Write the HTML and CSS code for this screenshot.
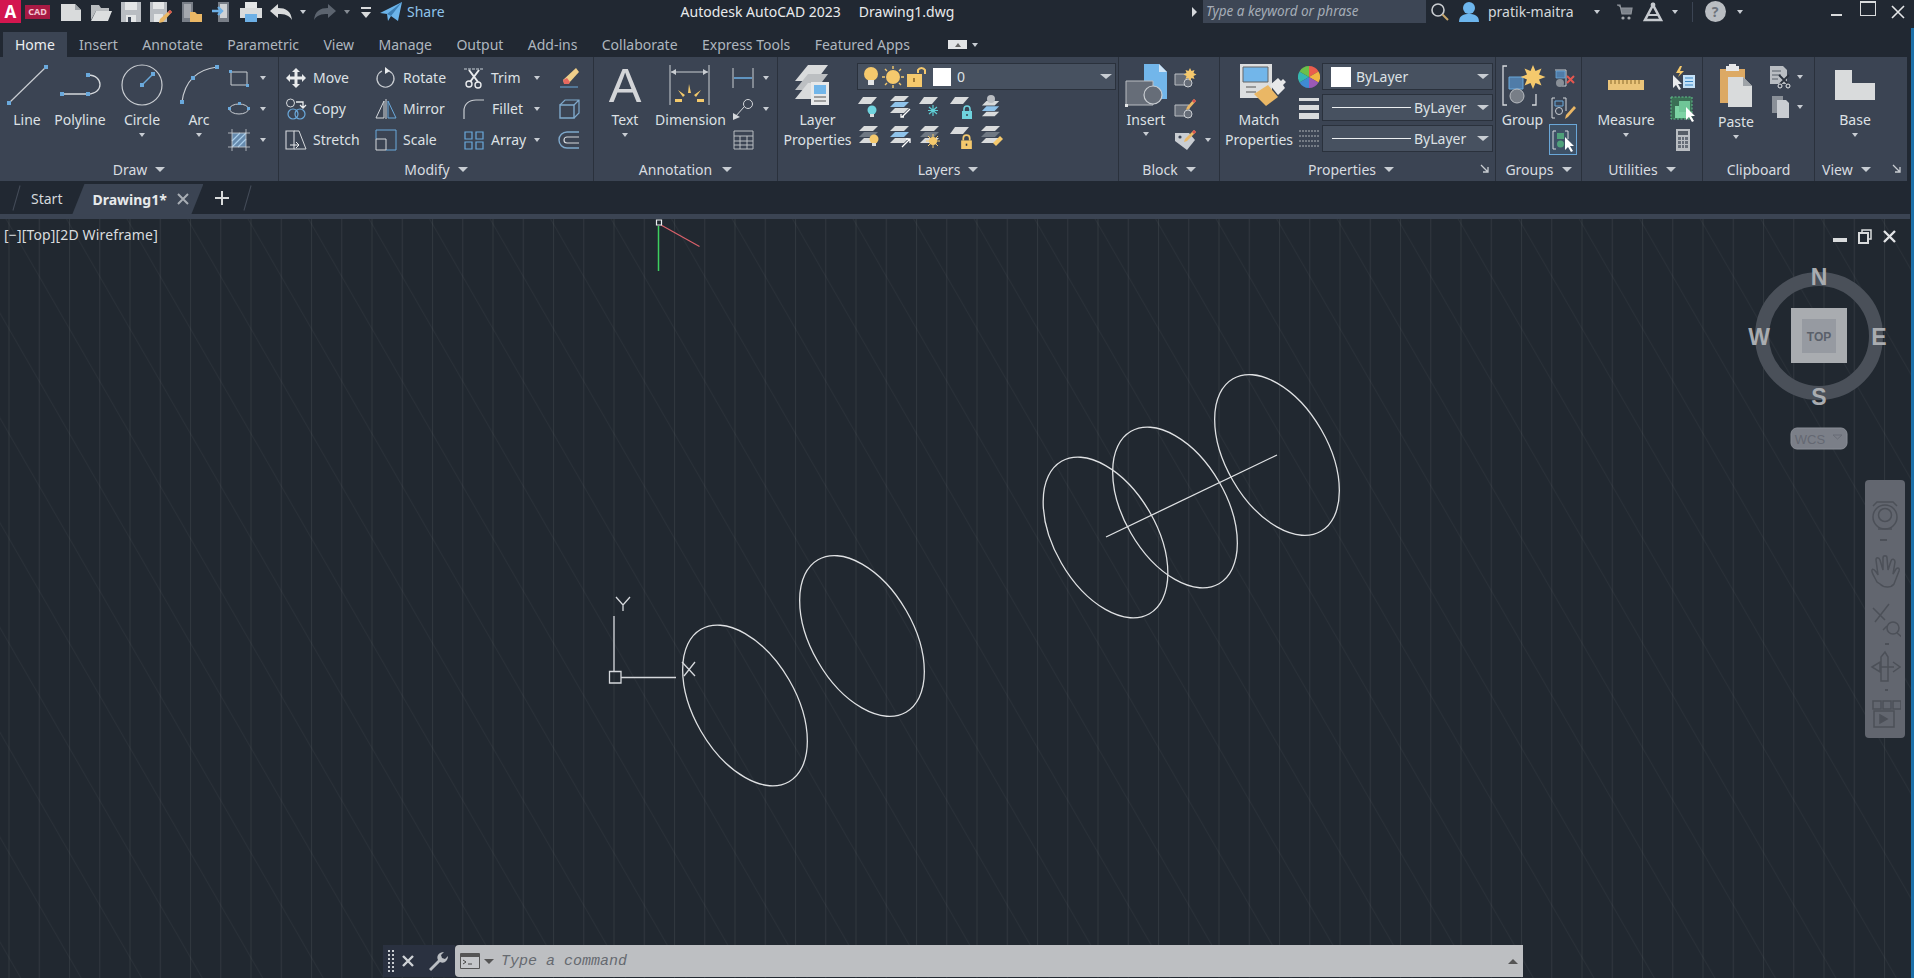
FILE: index.html
```html
<!DOCTYPE html>
<html lang="en">
<head>
<meta charset="utf-8">
<title>Autodesk AutoCAD 2023 - Drawing1.dwg</title>
<link rel="stylesheet" href="styles.css">
</head>
<body>
<svg class="defs" width="0" height="0">
  <defs>
    <symbol id="plate" viewBox="0 0 24 22"><path d="M6 2h14l-6 7H1z" fill="#d9dbdc"/></symbol>
    <symbol id="stack" viewBox="0 0 24 22"><path d="M7 1h14l-5 5H2z" fill="#d9dbdc"/><path d="M7 7h14l-5 5H2z" fill="#6f7883"/><path d="M7 13h14l-5 5H2z" fill="#d9dbdc"/></symbol>
    <symbol id="bluestack" viewBox="0 0 24 22"><path d="M7 1h14l-5 5H2z" fill="#d9dbdc"/><path d="M7 7h14l-5 5H2z" fill="#8ec2ea"/><path d="M7 13h14l-5 5H2z" fill="#d9dbdc"/></symbol>
    <symbol id="lockshape" viewBox="0 0 12 14"><path d="M3 6V4a3 3 0 0 1 6 0v2" fill="none" stroke="currentColor" stroke-width="1.6"/><rect x="1" y="6" width="10" height="8" fill="currentColor"/><path d="M6 9v2" stroke="#333b47" stroke-width="1.4"/></symbol>
  </defs>
</svg>
<div class="window">

  <header class="titlebar">
    <div class="logo"><span class="logo-a">A</span><span class="logo-cad">CAD</span></div>
    <div class="qat">
      <svg width="22" height="20" viewBox="0 0 22 20"><path d="M1 2h14l6 6v11H1z" fill="#d9dbdc"/><path d="M15 2l6 6h-6z" fill="#9ea3a8"/></svg>
      <svg width="22" height="20" viewBox="0 0 22 20"><path d="M1 3h8l2 3h8v3H6L1 18z" fill="#b9bcbf"/><path d="M6 9h16l-4 10H1z" fill="#dcdedf"/></svg>
      <svg width="22" height="22" viewBox="0 0 22 22"><path d="M1 1h20v20H1z" fill="#b9bdc2"/><path d="M5 1h12v8H5z" fill="#e4e6e7"/><path d="M6 14h10v7H6z" fill="#e4e6e7"/><path d="M8 16h3v5H8z" fill="#3b4453"/></svg>
      <svg width="24" height="22" viewBox="0 0 24 22"><path d="M1 1h17v20H1z" fill="#b9bdc2"/><path d="M4 1h11v7H4z" fill="#e4e6e7"/><path d="M5 13h9v8H5z" fill="#e4e6e7"/><path d="M21 9l2 2-9 10-4 1 1-4z" fill="#eab765"/><path d="M21 9l2 2-2 2-2-2z" fill="#d9534f"/></svg>
      <svg width="24" height="22" viewBox="0 0 24 22"><path d="M3 1h11v20H3z" fill="#787e87"/><path d="M5 3h7v14H5z" fill="#a4a8ae"/><path d="M11 11h5l2 2h5v8H11z" fill="#eab765"/></svg>
      <svg width="22" height="22" viewBox="0 0 22 22"><path d="M8 1h11v20H8z" fill="#787e87"/><path d="M10 3h7v14h-7z" fill="#cfd2d5"/><path d="M2 10h9M8 6l4 4-4 4" fill="none" stroke="#6db0e6" stroke-width="2.4"/></svg>
      <svg width="24" height="22" viewBox="0 0 24 22"><path d="M6 1h12v6H6z" fill="#e4e6e7"/><path d="M1 7h22v10H1z" fill="#d9dbdc"/><path d="M6 13h12v8H6z" fill="#6db0e6"/></svg>
      <svg width="24" height="18" viewBox="0 0 24 18"><path d="M1 8l8-7v4c8 0 13 3 14 12-3-5-7-6-14-6v4z" fill="#d9dbdc"/></svg>
      <i class="caret"></i>
      <svg width="24" height="18" viewBox="0 0 24 18"><path d="M23 8l-8-7v4C7 5 2 8 1 17c3-5 7-6 14-6v4z" fill="#5c646f"/></svg>
      <i class="caret dim"></i>
      <svg width="12" height="12" viewBox="0 0 12 12"><path d="M1 1h10v2H1z" fill="#d9dbdc"/><path d="M1 6h10L6 12z" fill="#d9dbdc"/></svg>
      <svg width="22" height="20" viewBox="0 0 22 20"><path d="M0 11L22 0l-4 19-7-5-3 5-1-7z" fill="#6cb4ea"/><path d="M7 12L22 0 11 14z" fill="#3d7fb5"/></svg>
      <span class="share">Share</span>
    </div>
    <div class="app-title"><span>Autodesk AutoCAD 2023</span><span>Drawing1.dwg</span></div>
    <div class="infocenter">
      <i class="tri-right"></i>
      <div class="search">Type a keyword or phrase</div>
      <svg width="20" height="20" viewBox="0 0 20 20"><circle cx="8" cy="8" r="6" fill="none" stroke="#c9ccd0" stroke-width="1.6"/><path d="M12.5 12.5L18 18" stroke="#c7a66a" stroke-width="2"/></svg>
      <svg width="22" height="22" viewBox="0 0 22 22"><circle cx="11" cy="7" r="6" fill="#6db6ee"/><path d="M1 21c0-7 5-8 10-8s10 1 10 8z" fill="#6db6ee"/></svg>
      <span class="user">pratik-maitra</span>
      <i class="caret"></i>
      <svg width="18" height="18" viewBox="0 0 18 18"><path d="M1 2h3l2 9h9l1-6H5" fill="#7d838b" stroke="#8f949b" stroke-width="1.2"/><circle cx="7" cy="15" r="1.6" fill="#a3a7ac"/><circle cx="13" cy="15" r="1.6" fill="#a3a7ac"/></svg>
      <svg width="20" height="20" viewBox="0 0 20 20"><path d="M10 3L2 18h16z" fill="none" stroke="#c6cacf" stroke-width="2.6"/><circle cx="10" cy="3" r="2.4" fill="#c6cacf"/><path d="M5 13h10" stroke="#c6cacf" stroke-width="2"/></svg>
      <i class="caret"></i>
      <i class="qat-sep"></i>
      <span class="help">?</span>
      <i class="caret"></i>
      <i class="gap"></i>
      <i class="win-min"></i>
      <i class="win-max"></i>
      <svg width="14" height="14" viewBox="0 0 14 14"><path d="M1 1l12 12M13 1L1 13" stroke="#e4e6e8" stroke-width="1.6"/></svg>
    </div>
  </header>

  <nav class="tabs">
    <a class="tab active">Home</a>
    <a class="tab">Insert</a>
    <a class="tab">Annotate</a>
    <a class="tab">Parametric</a>
    <a class="tab">View</a>
    <a class="tab">Manage</a>
    <a class="tab">Output</a>
    <a class="tab">Add-ins</a>
    <a class="tab">Collaborate</a>
    <a class="tab">Express Tools</a>
    <a class="tab">Featured Apps</a>
    <span class="tab-toggle"><i class="tri-up"></i></span>
    <i class="caret"></i>
  </nav>

  <section class="ribbon">

    <div class="panel draw">
      <div class="body">
        <div class="big">
          <svg width="54" height="48" viewBox="0 0 54 48"><path d="M9 40L46 4" stroke="#c9cdd2" stroke-width="1.2"/><path d="M7 38h4v4H7zM44 2h4v4h-4z" fill="#6aa9dc"/></svg>
          <span>Line</span>
        </div>
        <div class="big">
          <svg width="52" height="48" viewBox="0 0 52 48"><path d="M8 31h26c16 0 16-19 0-19" fill="none" stroke="#d5d8dc" stroke-width="1.3"/><path d="M6 29h4v4H6zM32 29h4v4h-4zM32 10h4v4h-4z" fill="#6aa9dc"/></svg>
          <span>Polyline</span>
        </div>
        <div class="big">
          <svg width="72" height="48" viewBox="0 0 72 48"><circle cx="36" cy="22" r="20" fill="none" stroke="#c9cdd2" stroke-width="1.2"/><path d="M36 22L47 11" stroke="#6aa9dc" stroke-width="1.4"/><path d="M34 20h4v4h-4zM45 9h4v4h-4z" fill="#6aa9dc"/></svg>
          <span>Circle</span><i class="caret"></i>
        </div>
        <div class="big">
          <svg width="42" height="48" viewBox="0 0 42 48"><path d="M4 39Q8 8 39 4" fill="none" stroke="#c9cdd2" stroke-width="1.2"/><path d="M2 37h4v4H2zM13 13h4v4h-4zM37 2h4v4h-4z" fill="#6aa9dc"/></svg>
          <span>Arc</span><i class="caret"></i>
        </div>
        <div class="small-col draw-small">
          <div class="irow">
            <svg width="22" height="18" viewBox="0 0 22 18"><path d="M3 3h16v13H3z" fill="none" stroke="#c9cdd2"/><path d="M1 1h3v3H1zM18 15h3v3h-3z" fill="#6aa9dc"/></svg><i class="caret push"></i>
          </div>
          <div class="irow">
            <svg width="22" height="14" viewBox="0 0 22 14"><ellipse cx="11" cy="7" rx="9.5" ry="5" fill="none" stroke="#c9cdd2"/><path d="M0 5h3v3H0zM10 0h3v3h-3zM19 5h3v3h-3z" fill="#6aa9dc"/></svg><i class="caret push"></i>
          </div>
          <div class="irow">
            <svg width="22" height="22" viewBox="0 0 22 22"><path d="M4 4h14v14H4z" fill="#668aad"/><path d="M4 12l8-8M4 18L18 4M10 18l8-8" stroke="#a9cdea" stroke-width="1.2"/><path d="M4 0v22M18 0v22M0 4h22M0 18h22" stroke="#c9cdd2" stroke-width=".8"/></svg><i class="caret push"></i>
          </div>
        </div>
      </div>
      <div class="panel-title">Draw <i class="caret"></i></div>
    </div>

    <div class="panel modify">
      <div class="body modify-grid">
        <div class="tool"><svg width="22" height="22" viewBox="0 0 22 22"><path d="M11 1l4 4h-2.500v4.500H17V7l4 4-4 4v-2.500h-4.500V17H15l-4 4-4-4h2.500v-4.500H5V15l-4-4 4-4v2.500h4.500V5H7z" fill="#e9ebed"/></svg><span>Move</span></div>
        <div class="tool"><svg width="22" height="22" viewBox="0 0 22 22"><path d="M14 4a8.500 8.500 0 1 1-7 0" fill="none" stroke="#c9cdd2" stroke-width="1.2"/><path d="M10 0l5 4-5 3z" fill="#e9ebed"/></svg><span>Rotate</span></div>
        <div class="tool"><svg width="22" height="22" viewBox="0 0 22 22"><path d="M1 2h20" stroke="#9aa3ad" stroke-width="1.4" stroke-dasharray="3 1"/><path d="M6 3l9 12M16 3L7 15" stroke="#e9ebed" stroke-width="2"/><circle cx="6" cy="17" r="3" fill="none" stroke="#e9ebed" stroke-width="1.4"/><circle cx="15" cy="18" r="3" fill="none" stroke="#e9ebed" stroke-width="1.4"/></svg><span>Trim</span><i class="caret"></i></div>
        <div class="tool lone"><svg width="22" height="22" viewBox="0 0 22 22"><path d="M18 1l3 4-10 11H6l-1-3z" fill="#f0cf8a"/><path d="M5 13l1 4h5l1-2-3-4z" fill="#e5685f"/><path d="M2 20h18" stroke="#6aa9dc"/></svg></div>

        <div class="tool"><svg width="22" height="22" viewBox="0 0 22 22"><circle cx="5.500" cy="5" r="4" fill="none" stroke="#d5d8dc"/><path d="M11 4h7v5M15 7l3 3 3-3" fill="none" stroke="#e9ebed" stroke-width="1.3"/><circle cx="8" cy="16" r="5" fill="none" stroke="#6aa9dc" stroke-width="1.2"/><circle cx="15" cy="16" r="5" fill="none" stroke="#6aa9dc" stroke-width="1.2"/></svg><span>Copy</span></div>
        <div class="tool"><svg width="22" height="22" viewBox="0 0 22 22"><path d="M9 3v17H1z" fill="none" stroke="#d5d8dc"/><path d="M13 3v17h8z" fill="none" stroke="#6aa9dc"/><path d="M11 1v20" stroke="#d5d8dc"/></svg><span>Mirror</span></div>
        <div class="tool"><svg width="22" height="22" viewBox="0 0 22 22"><path d="M1 21v-8C1 6 6 2 13 2h8" fill="none" stroke="#c9cdd2" stroke-width="1.2"/></svg><span class="fillet">Fillet</span><i class="caret"></i></div>
        <div class="tool lone"><svg width="22" height="22" viewBox="0 0 22 22"><path d="M2 7h14v13H2z" fill="none" stroke="#7fa9cc" stroke-width="1.4"/><path d="M2 7l5-5h14v13l-5 5M16 7l5-5" fill="none" stroke="#7fa9cc" stroke-width="1.2"/></svg></div>

        <div class="tool"><svg width="22" height="22" viewBox="0 0 22 22"><path d="M1 2h8v18H1z" fill="none" stroke="#d5d8dc" stroke-width="1.1"/><path d="M9 2h5l7 18H9" fill="none" stroke="#d5d8dc" stroke-width="1"/><path d="M5 16h9M11 13l3 3-3 3" fill="none" stroke="#e9ebed"/></svg><span>Stretch</span></div>
        <div class="tool"><svg width="22" height="22" viewBox="0 0 22 22"><path d="M1 1h20v20H11" fill="none" stroke="#6aa9dc"/><path d="M1 1v9" stroke="#6aa9dc"/><path d="M1 10h10v11H1z" fill="none" stroke="#d5d8dc"/></svg><span>Scale</span></div>
        <div class="tool"><svg width="22" height="22" viewBox="0 0 22 22"><path d="M2 3h7v7H2zM13 3h7v7h-7zM2 13h7v7H2zM13 13h7v7h-7z" fill="none" stroke="#6aa9dc" stroke-width="1.2"/></svg><span>Array</span><i class="caret"></i></div>
        <div class="tool lone"><svg width="22" height="22" viewBox="0 0 22 22"><path d="M21 3H9a8 8 0 0 0 0 16h12" fill="none" stroke="#7fa9cc" stroke-width="1.4"/><path d="M21 8H9a3 3 0 0 0 0 6h12" fill="none" stroke="#d5d8dc" stroke-width="1.2"/></svg></div>
      </div>
      <div class="panel-title">Modify <i class="caret"></i></div>
    </div>

    <div class="panel annotation">
      <div class="body">
        <div class="big"><span class="big-a">A</span><span>Text</span><i class="caret"></i></div>
        <div class="big">
          <svg width="69" height="48" viewBox="0 0 69 48"><path d="M14 2v40M53 2v40" stroke="#c9cdd2"/><path d="M15 9h37" stroke="#c9cdd2"/><path d="M15 9l5-3v6zM52 9l-5-3v6z" fill="#c9cdd2"/><path d="M33 21l2 9h-3zM22 27l7 5-2 2zM45 27l-7 5 2 2zM19 36h7v3h-7zM41 36h7v3h-7z" fill="#f3c96b"/></svg>
          <span>Dimension</span>
        </div>
        <div class="small-col">
          <div class="irow"><svg width="36" height="22" viewBox="0 0 36 22"><path d="M8 1v20M28 1v20" stroke="#c9cdd2"/><path d="M9 11h18" stroke="#6aa9dc" stroke-width="1.6"/></svg><i class="caret"></i></div>
          <div class="irow"><svg width="36" height="24" viewBox="0 0 36 24"><circle cx="23" cy="7" r="4.500" fill="none" stroke="#d5d8dc"/><path d="M19 10L10 20" stroke="#d5d8dc"/><path d="M8 16l7 4-7 3z" fill="#d5d8dc"/></svg><i class="caret"></i></div>
          <div class="irow"><svg width="36" height="22" viewBox="0 0 36 22"><path d="M9 2h19v18H9zM9 7h19M9 12h19M9 16h19M15 7v13M22 7v13" fill="none" stroke="#b9bdc2"/></svg></div>
        </div>
      </div>
      <div class="panel-title">Annotation <i class="caret"></i></div>
    </div>

    <div class="panel layers">
      <div class="body">
        <div class="big wide-label">
          <svg width="60" height="48" viewBox="0 0 60 48"><path d="M20 2h20L28 18H7z" fill="#d9dbdc"/><path d="M20 11h20L28 27H7z" fill="#bcbfc2"/><path d="M20 20h20L28 36H7z" fill="#d9dbdc"/><path d="M23 19h18v23H23z" fill="#e7e8e9"/><path d="M26 22h12v9H26z" fill="#72b6ea"/><path d="M26 34h12M26 38h12" stroke="#555"/></svg>
          <span>Layer<br>Properties</span>
        </div>
        <div class="layer-col">
          <div class="combo layer-combo">
            <svg width="18" height="24" viewBox="0 0 18 24"><circle cx="9" cy="9" r="7" fill="#f5c96d"/><path d="M6 15h6v5H6z" fill="#e4e6e7"/></svg>
            <svg width="24" height="24" viewBox="0 0 24 24"><circle cx="12" cy="12" r="7" fill="#f5c96d"/><path d="M12 1v3M12 20v3M1 12h3M20 12h3M4 4l2 2M18 18l2 2M20 4l-2 2M4 20l2-2" stroke="#f5c96d" stroke-width="1.4"/></svg>
            <svg width="20" height="24" viewBox="0 0 20 24"><path d="M12 8V5a4 4 0 0 1 7 0v4" fill="none" stroke="#f5c96d" stroke-width="2"/><path d="M1 9h15v13H1z" fill="#f5c96d"/><path d="M8 13v4" stroke="#7d5a20" stroke-width="1.4"/></svg>
            <i class="swatch small-swatch"></i>
            <span class="combo-text">0</span>
            <i class="caret big-caret"></i>
          </div>
          <div class="icon-row">
            <svg width="24" height="24" viewBox="0 0 24 24"><use href="#plate" width="24" height="22"/><circle cx="15" cy="15" r="4.500" fill="#6fd3de"/><path d="M13 19h4v3h-4z" fill="#d9dbdc"/></svg>
            <svg width="24" height="24" viewBox="0 0 24 24"><use href="#bluestack" width="24" height="22"/><path d="M22 14l-8 8M16 22h-3v-3" stroke="#fff" stroke-width="1.3" fill="none"/></svg>
            <svg width="24" height="24" viewBox="0 0 24 24"><use href="#plate" width="24" height="22"/><path d="M15 10v11M10 15.500h10M11 12l8 7M19 12l-8 7" stroke="#5fcfd6" stroke-width="1.2"/></svg>
            <svg width="24" height="24" viewBox="0 0 24 24"><use href="#plate" width="24" height="22"/><use href="#lockshape" x="12" y="10" width="12" height="14" color="#6fd3de"/></svg>
            <svg width="24" height="24" viewBox="0 0 24 24"><use href="#bluestack" y="5" width="24" height="20"/><circle cx="12" cy="4" r="4" fill="#b9bdc2"/></svg>
          </div>
          <div class="icon-row">
            <svg width="24" height="24" viewBox="0 0 24 24"><use href="#stack" width="24" height="22"/><circle cx="17" cy="14" r="4.500" fill="#f5c96d"/><path d="M15 18h4v3h-4z" fill="#d9dbdc"/></svg>
            <svg width="24" height="24" viewBox="0 0 24 24"><use href="#bluestack" width="24" height="22"/><path d="M14 22l8-8M18 14h4v4" stroke="#fff" stroke-width="1.3" fill="none"/></svg>
            <svg width="24" height="24" viewBox="0 0 24 24"><use href="#stack" width="24" height="22"/><circle cx="15" cy="16" r="4" fill="#f5c96d"/><path d="M15 9v14M8 16h14M10 11l10 10M20 11L10 21" stroke="#f5c96d"/></svg>
            <svg width="24" height="24" viewBox="0 0 24 24"><use href="#plate" width="24" height="22"/><use href="#lockshape" x="11" y="9" width="13" height="15" color="#f5c96d"/></svg>
            <svg width="24" height="24" viewBox="0 0 24 24"><use href="#stack" width="24" height="22"/><path d="M14 18l7-7 3 3-7 7z" fill="#f5c96d"/></svg>
          </div>
        </div>
      </div>
      <div class="panel-title">Layers <i class="caret"></i></div>
    </div>

    <div class="panel block">
      <div class="body">
        <div class="big">
          <svg width="54" height="46" viewBox="0 0 54 46"><path d="M25 0h15l8 8v27H25z" fill="#72b6ea"/><path d="M40 0l8 8h-8z" fill="#cfe4f5"/><path d="M7 17h27v24H7z" fill="#666d78" stroke="#b9bdc2"/><circle cx="34" cy="31" r="9" fill="#666d78" stroke="#c9cdd2" stroke-width="1.2"/><path d="M6 40h3v3H6z" fill="#e4e6e7"/></svg>
          <span class="up-label">Insert</span><i class="caret up-caret"></i>
        </div>
        <div class="small-col">
          <div class="irow"><svg width="24" height="22" viewBox="0 0 24 22"><path d="M2 7h14v11H2z" fill="#666d78" stroke="#b9bdc2"/><circle cx="15" cy="16" r="4" fill="#666d78" stroke="#c9cdd2"/><path d="M17 1l1.500 3 3-1-1 3 3 1.500-3 1.500 1 3-3-1-1.500 3-1.500-3-3 1 1-3-3-1.500 3-1.500-1-3 3 1z" fill="#f5c96d"/></svg></div>
          <div class="irow"><svg width="24" height="22" viewBox="0 0 24 22"><path d="M2 7h14v11H2z" fill="#666d78" stroke="#b9bdc2"/><circle cx="15" cy="16" r="4" fill="#666d78" stroke="#c9cdd2"/><path d="M21 1l2 2-7 8-3 1 1-3z" fill="#eab765"/><path d="M21 1l2 2-2 2-2-2z" fill="#d9534f"/></svg></div>
          <div class="irow wide-row"><svg width="24" height="22" viewBox="0 0 24 22"><path d="M2 4h14l6 7-8 10-12-9z" fill="#c9cdd2"/><circle cx="7" cy="8" r="1.600" fill="#3b4453"/><path d="M21 1l2 2-9 9-3 1 1-3z" fill="#eab765"/><path d="M21 1l2 2-2 2-2-2z" fill="#d9534f"/></svg><i class="caret"></i></div>
        </div>
      </div>
      <div class="panel-title">Block <i class="caret"></i></div>
    </div>

    <div class="panel properties">
      <div class="body">
        <div class="big wide-label">
          <svg width="78" height="48" viewBox="0 0 78 48"><path d="M20 1h32v34H20z" fill="#dcdedf"/><path d="M23 4h25v15H23z" fill="#72b6ea" stroke="#666"/><path d="M26 24h10M26 29h10" stroke="#555"/><path d="M34 31l14-9 10 12-12 9z" fill="#eab765"/><path d="M50 22l8-7 3 3 2-2 3 3-3 3 2 3-7 7z" fill="#e7e8e9"/></svg>
          <span>Match<br>Properties</span>
        </div>
        <div class="prop-col">
          <div class="prop-row">
            <svg class="wheel" width="22" height="22" viewBox="0 0 22 22"><path d="M11 11V0a11 11 0 0 1 9.500 5.500z" fill="#eb5d4d"/><path d="M11 11l9.500-5.500a11 11 0 0 1 0 11z" fill="#f1b542"/><path d="M11 11l9.500 5.500A11 11 0 0 1 11 22z" fill="#9b59b6"/><path d="M11 11v11a11 11 0 0 1-9.500-5.500z" fill="#3f8bd3"/><path d="M11 11L1.500 16.500a11 11 0 0 1 0-11z" fill="#35b7b0"/><path d="M11 11L1.500 5.500A11 11 0 0 1 11 0z" fill="#6cc04a"/></svg>
            <div class="combo"><i class="swatch"></i><span class="combo-text">ByLayer</span><i class="caret big-caret"></i></div>
          </div>
          <div class="prop-row">
            <svg width="22" height="22" viewBox="0 0 22 22"><path d="M1 1h20v3H1zM1 8h20v5H1zM1 16h20v6H1z" fill="#d9dbdc"/></svg>
            <div class="combo"><i class="line-sample"></i><span class="combo-text tight">ByLayer</span><i class="caret big-caret"></i></div>
          </div>
          <div class="prop-row">
            <svg width="22" height="22" viewBox="0 0 22 22"><path d="M1 3h20M1 8h20M1 13h20M1 18h20" stroke="#aeb2b7" stroke-dasharray="2 1"/></svg>
            <div class="combo"><i class="line-sample"></i><span class="combo-text tight">ByLayer</span><i class="caret big-caret"></i></div>
          </div>
        </div>
      </div>
      <div class="panel-title shift-left">Properties <i class="caret"></i></div>
      <svg class="launch" width="10" height="10" viewBox="0 0 10 10"><path d="M1 1l7 7M3 8h5V3" fill="none" stroke="#c9cdd2" stroke-width="1.300"/></svg>
    </div>

    <div class="panel groups">
      <div class="body">
        <div class="big">
          <svg width="53" height="48" viewBox="0 0 53 48"><path d="M11 3H7v39h4M36 42h4V31" fill="none" stroke="#d5d8dc" stroke-width="1.300"/><path d="M13 14h14v12H13z" fill="#507ca8" stroke="#6aa9dc"/><circle cx="21" cy="33" r="7" fill="#787e87" stroke="#b9bdc2"/><path d="M37 2l2.500 6 6-2.500-2.500 6 6.500 2.500-6.500 2.500 2.500 6-6-2.500-2.500 6-2.500-6-6 2.500 2.500-6-6.500-2.500 6.500-2.500-2.500-6 6 2.500z" fill="#f5c96d"/></svg>
          <span>Group</span>
        </div>
        <div class="small-col">
          <div class="irow"><svg width="28" height="22" viewBox="0 0 28 22"><path d="M6 3h11M17 3v16h-4" fill="none" stroke="#c9cdd2"/><path d="M7 4h9v7H7z" fill="#507ca8" stroke="#6aa9dc" stroke-width=".8"/><circle cx="11" cy="16" r="4" fill="#8a9098"/><path d="M18 9l7 7M25 9l-7 7" stroke="#e5574f" stroke-width="2"/></svg></div>
          <div class="irow"><svg width="28" height="24" viewBox="0 0 28 24"><path d="M6 1H3v20h3M14 1h3v13" fill="none" stroke="#d5d8dc"/><path d="M6 4h8v5H6z" fill="none" stroke="#6aa9dc"/><circle cx="10" cy="14" r="3.500" fill="none" stroke="#c9cdd2"/><path d="M25 9l2 2-8 9-3 2 1-4z" fill="#eab765"/></svg></div>
          <div class="irow selected"><svg width="26" height="24" viewBox="0 0 26 24"><path d="M6 3H3v18h3M15 3h3v8" fill="none" stroke="#d5d8dc"/><path d="M7 5h7v6H7z" fill="#4fa07a"/><circle cx="10.500" cy="16" r="3.500" fill="#4fa07a"/><path d="M15 9v13l3-3 3 5 2-1-3-5h4z" fill="#fff"/></svg></div>
        </div>
      </div>
      <div class="panel-title">Groups <i class="caret"></i></div>
    </div>

    <div class="panel utilities">
      <div class="body">
        <div class="big">
          <svg width="88" height="48" viewBox="0 0 88 48"><path d="M26 17h36v10H26z" fill="#eac47a"/><path d="M29 17v4M33 17v4M37 17v4M41 17v4M45 17v4M49 17v4M53 17v4M57 17v4" stroke="#8a6a2c"/></svg>
          <span>Measure</span><i class="caret"></i>
        </div>
        <div class="small-col">
          <div class="irow"><svg width="26" height="26" viewBox="0 0 26 26"><path d="M10 1L6 8h4l-2 4 6-6h-4l2-5z" fill="#f5c96d"/><path d="M3 10v13l3-3 3 5 2-1-3-5h4z" fill="#e9ebed"/><path d="M13 10h12v13H13z" fill="#c5e2f7"/><path d="M15 13h8M15 16.500h8M15 20h8" stroke="#3a87c6"/></svg></div>
          <div class="irow"><svg width="26" height="26" viewBox="0 0 26 26"><path d="M1 1h21v22H1z" fill="#3a6f55" stroke="#63c28d" stroke-dasharray="2 1.500"/><path d="M5 10h11v12H5z" fill="#7dd3a4"/><path d="M9 5h11v11H9z" fill="#6fc597"/><path d="M16 11v13l3-3 3 5 2-1-3-5h4z" fill="#fff"/></svg></div>
          <div class="irow"><svg width="16" height="22" viewBox="0 0 16 22"><path d="M1 0h14v22H1z" fill="#b9bdc2"/><path d="M3 2h10v4H3z" fill="#555c66"/><path d="M3 8h3v3H3zM7 8h2v3H7zM10 8h3v3h-3zM3 12h3v3H3zM7 12h2v3H7zM10 12h3v3h-3zM3 16h3v3H3zM7 16h2v3H7zM10 16h3v3h-3z" fill="#666d78"/></svg></div>
        </div>
      </div>
      <div class="panel-title">Utilities <i class="caret"></i></div>
    </div>

    <div class="panel clipboard">
      <div class="body">
        <div class="big">
          <svg width="66" height="48" viewBox="0 0 66 48"><path d="M17 6h25v34H17z" fill="#dca964"/><path d="M23 3h13v5H23z" fill="#e7e8e9"/><path d="M26 1h7v3h-7z" fill="#e7e8e9"/><path d="M25 14h15l9 9v21H25z" fill="#d9dbdc"/><path d="M40 14l9 9h-9z" fill="#9ea3a8"/></svg>
          <span class="down-label">Paste</span><i class="caret"></i>
        </div>
        <div class="small-col">
          <div class="irow"><svg width="22" height="24" viewBox="0 0 22 24"><path d="M1 1h13l4 4v14H1z" fill="#b9bdc2"/><path d="M3 6h9M3 10h9M3 14h6" stroke="#555c66"/><path d="M10 10l10 10M20 10L10 20" stroke="#2a313c" stroke-width="1.800"/><circle cx="11" cy="21" r="2" fill="none" stroke="#e9ebed"/><circle cx="19" cy="21" r="2" fill="none" stroke="#e9ebed"/></svg><i class="caret"></i></div>
          <div class="irow"><svg width="22" height="24" viewBox="0 0 22 24"><path d="M3 1h11v17H3z" fill="#8a9098"/><path d="M8 5h9l3 3v15H8z" fill="#c9cdd2"/></svg><i class="caret"></i></div>
        </div>
      </div>
      <div class="panel-title">Clipboard</div>
    </div>

    <div class="panel viewp">
      <div class="body">
        <div class="big">
          <svg width="80" height="48" viewBox="0 0 80 48"><path d="M20 7h17v13h23v17H20z" fill="#d9dbdc"/></svg>
          <span>Base</span><i class="caret"></i>
        </div>
      </div>
      <div class="panel-title shift-left">View <i class="caret"></i></div>
      <svg class="launch" width="10" height="10" viewBox="0 0 10 10"><path d="M1 1l7 7M3 8h5V3" fill="none" stroke="#c9cdd2" stroke-width="1.300"/></svg>
    </div>
  </section>

  <div class="doctabs">
    <i class="doc-slash first"></i>
    <span class="doc-start">Start</span>
    <div class="doc-active"><span>Drawing1*</span><svg width="12" height="12" viewBox="0 0 12 12"><path d="M1 1l10 10M11 1L1 11" stroke="#a8adb4" stroke-width="2"/></svg></div>
    <svg class="doc-plus" width="16" height="16" viewBox="0 0 16 16"><path d="M8 1v14M1 8h14" stroke="#d9dbdc" stroke-width="2"/></svg>
    <i class="doc-slash"></i>
  </div>
  <div class="strip"></div>

  <main class="canvas">
    <svg class="model" viewBox="0 219 1914 759" width="1914" height="759">
      <defs>
        <pattern id="vgrid" patternUnits="userSpaceOnUse" width="30.25" height="40" x="8.500">
          <path d="M.5 0v40" stroke="#fff" stroke-opacity=".07"/>
        </pattern>
        <pattern id="dgrid" patternUnits="userSpaceOnUse" width="52.400" height="100" patternTransform="rotate(-30)">
          <path d="M.5 0v100" stroke="#fff" stroke-opacity=".04"/>
        </pattern>
      </defs>
      <rect x="0" y="219" width="1914" height="759" fill="url(#vgrid)"/>
      <rect x="0" y="219" width="1914" height="759" fill="url(#dgrid)"/>

      <g fill="none" stroke="#dfe1e3" stroke-width="1.300">
        <ellipse cx="745" cy="705.500" rx="51" ry="88" transform="rotate(-30 745 705.500)"/>
        <ellipse cx="862" cy="636" rx="51" ry="88" transform="rotate(-30 862 636)"/>
        <ellipse cx="1105.500" cy="537.500" rx="51" ry="88" transform="rotate(-30 1105.500 537.500)"/>
        <ellipse cx="1175" cy="507.500" rx="51" ry="88" transform="rotate(-30 1175 507.500)"/>
        <ellipse cx="1277" cy="455" rx="51" ry="88" transform="rotate(-30 1277 455)"/>
        <path d="M1106 537L1277 455"/>
      </g>

      <g fill="none" stroke="#d5d8dc" stroke-width="1.300">
        <path d="M614 616v55M621 677.500h55M609.500 671.500h11.500v11.500h-11.500z"/>
        <path d="M616 597l7 8 7-8M623 605v6M682 662l13 14M684 676l11-14"/>
      </g>
      <path d="M658.500 226v45" stroke="#3ecf5f" stroke-width="1.500"/>
      <path d="M661 225l38.500 21.600" stroke="#d9606a" stroke-width="1.200"/>
      <path d="M656.500 220h5v5h-5z" fill="none" stroke="#eceef0" stroke-width="1.200"/>
    </svg>

    <div class="viewport-label">[−][Top][2D Wireframe]</div>

    <div class="vp-controls">
      <i class="vp-min"></i>
      <svg width="14" height="15" viewBox="0 0 14 15"><path d="M1 4h9v10H1z" fill="none" stroke="#d9dbdc" stroke-width="2"/><path d="M4 3V1h9v9h-2" fill="none" stroke="#d9dbdc" stroke-width="1.500"/></svg>
      <svg width="13" height="13" viewBox="0 0 13 13"><path d="M1 1l11 11M12 1L1 12" stroke="#e2e4e6" stroke-width="2.400"/></svg>
    </div>

    <svg class="viewcube" viewBox="1740 265 150 190" width="150" height="190">
      <circle cx="1819" cy="336" r="57" fill="none" stroke="#4a5059" stroke-width="14"/>
      <path d="M1791 308h56v55h-56z" fill="#a9acb0"/>
      <path d="M1802 319h34v34h-34z" fill="#969aa1"/>
      <g class="cube-letters">
        <text x="1819" y="285">N</text>
        <text x="1819" y="405">S</text>
        <text x="1759" y="345">W</text>
        <text x="1879" y="345">E</text>
      </g>
      <text class="cube-top" x="1819" y="341">TOP</text>
      <rect x="1791" y="428" width="56" height="21" rx="6" fill="#7b7f88" stroke="#8a8e96"/>
      <text class="cube-wcs" x="1810" y="444">WCS</text>
      <path d="M1833 435h9l-4.500 4z" fill="none" stroke="#686c76"/>
    </svg>

    <div class="navbar">
      <svg width="32" height="254" viewBox="0 0 32 254">
        <g fill="none" stroke="#4c5058" stroke-width="1.500">
          <circle cx="16" cy="35" r="12"/><circle cx="16" cy="33" r="6.500"/><path d="M4 24l4-4h16l4 4M9 47h14"/>
          <path d="M11 58h7" stroke-width="2"/>
          <path d="M8 100c-3-6-6-10-5-12s4 1 6 5l-2-15c0-3 3-3 4 0l3 10V76c0-3 4-3 4 0l1 12 3-9c1-3 4-2 4 1l-2 12 3-5c2-2 4-1 3 2l-5 13c-3 4-10 4-14 0z"/>
          <path d="M4 126l12 12M20 122L6 140M14 148l4-4"/><circle cx="24" cy="146" r="6"/><path d="M28 151l6 5"/>
          <path d="M16 162h4" stroke-width="2"/>
          <path d="M16 170l-4 5v24h7v-24zM3 185l8-5v10zM11 185h14M24 180l7 5-7 5"/>
          <path d="M16 208h3" stroke-width="2"/>
          <path d="M4 219h8v8H4zM14 219h8v8h-8zM24 219h8v8h-8zM5 229h20v16H5z"/><path d="M11 233l7 4-7 4z" fill="#4c5058"/>
        </g>
      </svg>
    </div>

    <div class="cmdline">
      <div class="cmd-handle">
        <i class="grip"></i>
        <svg width="12" height="12" viewBox="0 0 12 12"><path d="M1 1l10 10M11 1L1 11" stroke="#cfd2d6" stroke-width="2.400"/></svg>
        <svg class="wrench" width="20" height="20" viewBox="0 0 20 20"><path d="M1 18l9-9c-2-4 1-8 6-8l-3 3 1 3 3 1 3-3c0 5-4 8-8 6l-9 9z" fill="#b9bdc2"/></svg>
      </div>
      <div class="cmd-input">
        <svg width="20" height="16" viewBox="0 0 20 16"><path d="M.5.5h19v15H.5z" fill="#c5c7ca" stroke="#555"/><path d="M1 1h18v3H1z" fill="#555"/><path d="M3 7l3 2-3 2M8 11h4" fill="none" stroke="#444"/></svg>
        <i class="tri-down"></i>
        <span class="cmd-text">Type a command</span>
        <i class="tri-up-dark"></i>
      </div>
    </div>
  </main>

  <i class="window-edge"></i>
</div>
</body>
</html>
```

FILE: styles.css
```css
* { box-sizing: border-box; }
html, body { margin: 0; padding: 0; }
body
{
	background: #212832;
	color: #dde1e5;
	font-family: "Noto Sans", "Open Sans", sans-serif;
	font-size: 14px;
	overflow: hidden;
}
i { display: block; font-style: normal; }
svg { display: block; flex: none; }
.defs { position: absolute; }

.window
{
	position: relative;
	width: 1914px;
	height: 978px;
	display: flex;
	flex-direction: column;
	overflow: hidden;
}

/* small drop arrows */
.caret
{
	width: 0;
	height: 0;
	border-left: 3.5px solid transparent;
	border-right: 3.5px solid transparent;
	border-top: 4px solid #c8cdd3;
	flex: none;
}
.caret.dim { border-top-color: #868c94; }
.caret.big-caret
{
	border-left-width: 6px;
	border-right-width: 6px;
	border-top-width: 5px;
	margin-left: auto;
}

/* title bar */
.titlebar { height: 32px; display: flex; align-items: flex-start; }
.logo { width: 56px; height: 23px; display: flex; align-items: center; }
.logo-a
{
	width: 21px;
	height: 23px;
	background: #d3164f;
	color: #fff;
	font-weight: 700;
	font-size: 17px;
	line-height: 23px;
	text-align: center;
}
.logo-cad
{
	width: 25px;
	height: 14px;
	margin-left: 4px;
	background: #a81a44;
	color: #f3c5d2;
	font-size: 9px;
	font-weight: 700;
	line-height: 14px;
	text-align: center;
}
.qat
{
	display: grid;
	grid-template-columns: repeat(8, 30px) 14px 30px 14px 24px 26px auto;
	grid-template-rows: 23px;
	align-items: center;
	justify-items: center;
}
.share { color: #8fc4ec; padding-left: 3px; justify-self: start; }
.app-title
{
	margin-left: 236px;
	height: 23px;
	display: flex;
	gap: 18px;
	align-items: center;
	color: #e8eaec;
}
.infocenter
{
	position: absolute;
	left: 1185px;
	top: 0;
	display: grid;
	grid-template-columns: 18px 223px 28px 30px 100px 26px 30px 26px 18px 16px 30px 20px 72px 28px 36px 24px;
	grid-template-rows: 23px;
	align-items: center;
	justify-items: center;
}
.tri-right
{
	border-top: 5px solid transparent;
	border-bottom: 5px solid transparent;
	border-left: 5px solid #d5d8dc;
}
.search
{
	width: 100%;
	height: 23px;
	background: #3d4655;
	color: #a5adb7;
	font-style: italic;
	line-height: 22px;
	padding-left: 3px;
	font-size: 13.500px;
}
.user { justify-self: start; padding-left: 4px; color: #d5d8dc; }
.qat-sep { width: 1px; height: 20px; background: #3b4453; }
.help
{
	width: 21px;
	height: 21px;
	border-radius: 50%;
	background: #b9bdc2;
	color: #6d737c;
	font-weight: 700;
	font-size: 14px;
	line-height: 21px;
	text-align: center;
}
.win-min { width: 11px; height: 2px; background: #d9dbdc; margin-top: 6px; }
.win-max { width: 16px; height: 15px; border: 1px solid #d9dbdc; border-top-width: 2px; margin-top: -7px; }

/* ribbon tabs */
.tabs { height: 25px; display: flex; align-items: center; padding-left: 3px; }
.tab { padding: 0 12.200px; line-height: 25px; color: #aeb6bf; }
.tab.active { background: #3b4453; color: #eceef0; padding: 0 12px; }
.tab-toggle
{
	width: 19px;
	height: 9px;
	margin-left: 26px;
	margin-right: 5px;
	background: #e2e4e6;
	display: flex;
	align-items: center;
	justify-content: center;
}
.tri-up
{
	border-left: 3px solid transparent;
	border-right: 3px solid transparent;
	border-bottom: 4px solid #666;
}

/* ribbon */
.ribbon { height: 124px; width: 1907px; display: flex; background: #3b4453; }
.panel
{
	position: relative;
	height: 100%;
	display: flex;
	flex-direction: column;
	border-right: 1px solid #2a313c;
	flex: none;
}
.body { height: 100px; padding-top: 6px; display: grid; align-items: start; }
.panel-title
{
	height: 24px;
	display: flex;
	align-items: center;
	justify-content: center;
	gap: 8px;
	color: #d8dce0;
}
.panel-title .caret { border-left-width: 5px; border-right-width: 5px; border-top-width: 5px; }
.panel-title.shift-left { justify-content: flex-start; }
.launch { position: absolute; right: 5px; bottom: 7px; }

.big { display: flex; flex-direction: column; align-items: center; text-align: center; }
.big svg { height: 48px; }
.big span { line-height: 18px; }
.big .caret { margin-top: 4px; }
.big.wide-label span { line-height: 20px; margin-top: -1px; }
.big .up-label { margin-top: 2px; line-height: 18px; height: 18px; position: relative; top: -2px; }
.big .up-caret { margin-top: 1px; }
.big .down-label { padding-top: 2px; }
.big .big-a
{
	display: block;
	height: 48px;
	font-family: "Liberation Sans", sans-serif;
	font-size: 49px;
	line-height: 44px;
	color: #d3d5d8;
}

.small-col { display: grid; grid-auto-rows: 31px; margin-top: -1px; }
.irow { display: flex; align-items: center; justify-content: center; }
.irow svg { width: auto; }

.draw { width: 279px; }
.draw .body { grid-template-columns: 54px 52px 72px 42px 58px; }
.draw-small { padding-left: 8px; }
.draw-small .irow { justify-content: flex-start; }
.draw-small .push { margin-left: 10px; }

.modify { width: 315px; }
.modify-grid
{
	padding-left: 6px;
	grid-template-columns: 90px 88px 95px 1fr;
	grid-auto-rows: 31px;
}
.modify-grid .tool { position: relative; top: -1px; }
.tool { display: flex; align-items: center; height: 31px; gap: 6px; }
.tool .caret { margin-left: auto; margin-right: 18px; }
.tool.lone { padding-left: 0; }
.tool .fillet { margin-left: 1px; }

.annotation { width: 184px; }
.annotation .body { grid-template-columns: 62px 69px 53px; }
.annotation .irow { justify-content: flex-start; }
.annotation .caret { margin-left: 2px; }
.annotation .big .caret { margin-left: 0; }

.layers { width: 341px; }
.layers .body { grid-template-columns: 79px 1fr; }
.layer-col { width: 259px; }
.combo
{
	height: 27px;
	width: 100%;
	display: flex;
	align-items: center;
	background: #475160;
	border: 1px solid #2a313c;
	padding: 0 3px 0 8px;
}
.combo-text { color: #dde1e5; }
.combo-text.tight { margin-left: 3px; }
.swatch { width: 20px; height: 20px; background: #fff; margin-right: 5px; flex: none; }
.small-swatch { width: 18px; height: 18px; margin-left: 6px; }
.layer-combo { padding-left: 4px; gap: 1px; margin-bottom: 2px; }
.icon-row
{
	height: 30px;
	margin-left: -3px;
	display: grid;
	grid-template-columns: repeat(5, 30.500px);
	align-items: center;
	justify-items: center;
}

.block { width: 101px; }
.block .body { grid-template-columns: 54px 47px; }
.block .irow { justify-content: flex-start; }
.block .wide-row { gap: 8px; }

.properties { width: 276px; }
.properties .body { grid-template-columns: 78px 1fr; }
.prop-col { display: grid; grid-auto-rows: 27px; gap: 4px; }
.prop-row { display: grid; grid-template-columns: 24px 171px; align-items: center; justify-items: start; }
.line-sample { width: 79px; height: 1px; background: #eceef0; flex: none; margin-left: 1px; }
.properties .panel-title { padding-left: 88px; }

.groups { width: 86px; }
.groups .body { grid-template-columns: 53px 28px; }
.selected { border: 1px solid #6aa7d8; background: #3e5166; }

.utilities { width: 121px; }
.utilities .body { grid-template-columns: 88px 26px; }

.clipboard { width: 112px; }
.clipboard .body { grid-template-columns: 66px 43px; }
.clipboard .irow { justify-content: flex-start; gap: 6px; }
.clipboard .small-col { grid-auto-rows: 30px; }

.viewp { width: 92px; border-right: 0; }
.viewp .body { grid-template-columns: 80px; }
.viewp .panel-title { padding-left: 7px; }

/* drawing tabs */
.doctabs { height: 33px; display: flex; align-items: center; padding-left: 12px; }
.doc-slash { width: 1px; height: 26px; background: #444c59; transform: rotate(16deg); margin-left: 17px; }
.doc-slash.first { margin-left: 4px; }
.doc-start { margin-left: 14px; color: #d5d8dc; position: relative; top: 1px; }
.doc-active
{
	align-self: flex-end;
	height: 30px;
	width: 131px;
	margin-left: 10px;
	padding-left: 20px;
	display: flex;
	align-items: center;
	gap: 10px;
	background: #3b4453;
	font-weight: 700;
	color: #e8eaec;
	clip-path: polygon(12px 0, 100% 0, 119px 100%, 0 100%);
}
.doc-plus { margin-left: 11px; }

.strip { height: 5px; width: 1910px; background: #3b4453; }

/* model space */
.canvas { position: relative; flex: 1; background: #212830; }
.model { position: absolute; left: 0; top: 0; }
.viewport-label
{
	position: absolute;
	left: 4px;
	top: 6px;
	color: #d9dcdf;
	line-height: 20px;
	letter-spacing: .15px;
}
.vp-controls
{
	position: absolute;
	left: 1833px;
	top: 10px;
	display: flex;
	align-items: center;
	gap: 11px;
}
.vp-min { width: 14px; height: 4px; background: #d9dbdc; margin-top: 6px; }
.viewcube { position: absolute; left: 1740px; top: 46px; }
.cube-letters text
{
	font-family: "Liberation Sans", sans-serif;
	font-weight: 700;
	font-size: 23px;
	fill: #a9acb0;
	text-anchor: middle;
}
.viewcube .cube-top
{
	font-family: "Liberation Sans", sans-serif;
	font-weight: 700;
	font-size: 12px;
	fill: #5a606a;
	text-anchor: middle;
}
.cube-wcs
{
	font-family: "Liberation Sans", sans-serif;
	font-size: 13px;
	fill: #646872;
	text-anchor: middle;
}
.navbar
{
	position: absolute;
	left: 1865px;
	top: 261px;
	width: 40px;
	height: 258px;
	padding: 2px 4px;
	background: #62666f;
	border-radius: 4px;
}
.cmdline
{
	position: absolute;
	left: 383px;
	bottom: 1px;
	width: 1140px;
	height: 32px;
	display: flex;
}
.cmd-handle
{
	width: 72px;
	display: flex;
	align-items: center;
	gap: 8px;
	padding-left: 5px;
	background: #2a3140;
}
.cmd-handle .wrench { margin-left: 6px; }
.grip { width: 6px; height: 22px; border-left: 2px dotted #c9cdd2; border-right: 2px dotted #c9cdd2; }
.cmd-input
{
	flex: 1;
	display: flex;
	align-items: center;
	padding: 0 5px;
	background: #bdbfc2;
	border-radius: 4px 0 0 4px;
}
.tri-down
{
	margin-left: 4px;
	border-left: 5px solid transparent;
	border-right: 5px solid transparent;
	border-top: 5px solid #555;
}
.cmd-text
{
	margin-left: 7px;
	font-family: "Liberation Mono", monospace;
	font-style: italic;
	font-size: 15px;
	color: #666a70;
}
.tri-up-dark
{
	margin-left: auto;
	margin-right: 0;
	border-left: 5px solid transparent;
	border-right: 5px solid transparent;
	border-bottom: 5px solid #555;
}
.window-edge
{
	position: absolute;
	left: 1911px;
	top: 28px;
	bottom: 0;
	width: 3px;
	background: #1c6fa8;
}
```
